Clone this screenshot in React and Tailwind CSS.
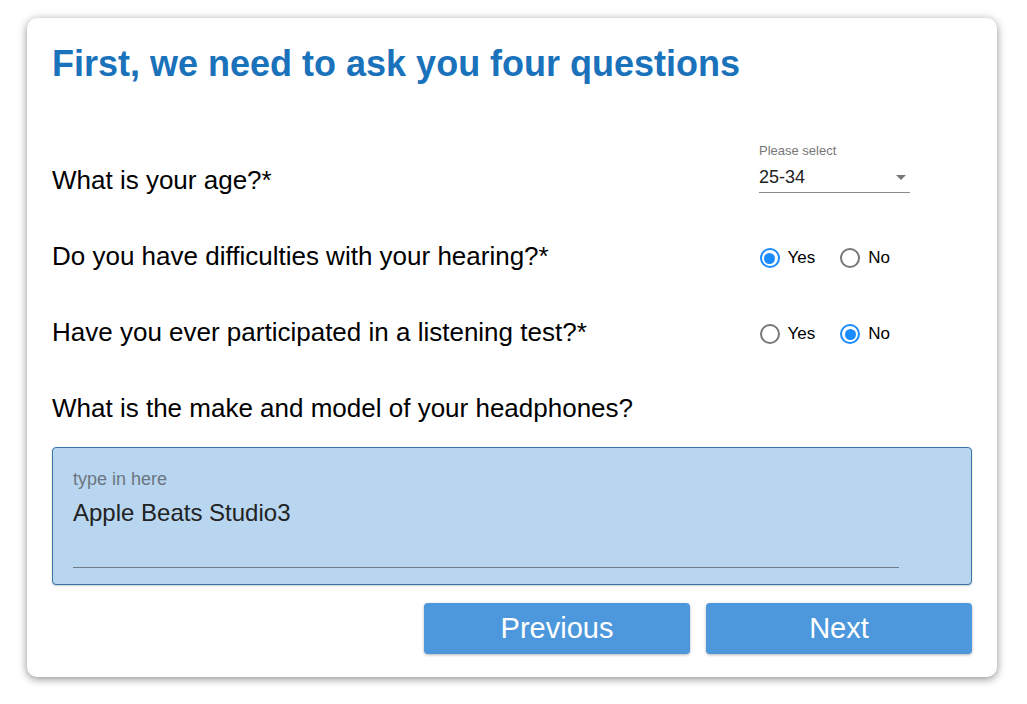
import { useState } from 'react';

const font = { fontFamily: '"Liberation Sans", Arial, sans-serif' };

function Radio({ checked, label, onClick }) {
  return (
    <button type="button" onClick={onClick} className="flex items-center gap-[8px]">
      {checked ? (
        <span className="flex h-[20px] w-[20px] items-center justify-center rounded-full border-2 border-[#1a8cff]">
          <span className="h-[11px] w-[11px] rounded-full bg-[#1a8cff]" />
        </span>
      ) : (
        <span className="h-[20px] w-[20px] rounded-full border-2 border-[#777]" />
      )}
      <span className="text-[17px] leading-[20px] text-black">{label}</span>
    </button>
  );
}

function Question({ children, control }) {
  return (
    <div className="flex h-[76px] items-center justify-between">
      <span className="text-[26px] leading-[30px] text-black">{children}</span>
      {control}
    </div>
  );
}

export default function App() {
  const [hearing, setHearing] = useState('yes');
  const [tested, setTested] = useState('no');

  return (
    <div className="h-[704px] w-[1027px] bg-white pl-[27px] pt-[18px]" style={font}>
      <div className="h-[659px] w-[970px] rounded-[10px] bg-white px-[25px] pt-[25px] shadow-[0_2px_8px_rgba(0,0,0,0.45)]">
        <h1 className="text-[36px] font-bold leading-[42px] text-[#1a72bb]">
          First, we need to ask you four questions
        </h1>

        <div className="mt-[57px]">
          <Question
            control={
              <div className="mr-[62px] w-[151px] -translate-y-[12px]">
                <div className="text-[13px] leading-[16px] text-[#777]">Please select</div>
                <div className="mt-[5px] flex h-[29px] items-start justify-between border-b border-[#8a8a8a]">
                  <span className="text-[18px] leading-[26px] text-[#222]">25-34</span>
                  <span className="mr-[4px] mt-[11px] h-0 w-0 border-x-[5px] border-t-[5px] border-x-transparent border-t-[#777]" />
                </div>
              </div>
            }
          >
            What is your age?*
          </Question>

          <Question
            control={
              <div className="mr-[82px] flex translate-y-[2px] gap-[25px]">
                <Radio checked={hearing === 'yes'} label="Yes" onClick={() => setHearing('yes')} />
                <Radio checked={hearing === 'no'} label="No" onClick={() => setHearing('no')} />
              </div>
            }
          >
            Do you have difficulties with your hearing?*
          </Question>

          <Question
            control={
              <div className="mr-[82px] flex translate-y-[2px] gap-[25px]">
                <Radio checked={tested === 'yes'} label="Yes" onClick={() => setTested('yes')} />
                <Radio checked={tested === 'no'} label="No" onClick={() => setTested('no')} />
              </div>
            }
          >
            Have you ever participated in a listening test?*
          </Question>

          <Question>What is the make and model of your headphones?</Question>
        </div>

        <div className="mt-[1px] h-[138px] w-[920px] rounded-[4px] border border-[#3d72a6] bg-[#b8d6f0] px-[20px] pt-[20px] shadow-[0_1px_2px_rgba(0,0,0,0.2)]">
          <div className="text-[18px] leading-[22px] text-[#6b7580]">type in here</div>
          <div className="mt-[9px] text-[24px] leading-[28px] text-[#222]">Apple Beats Studio3</div>
          <div className="mr-[52px] mt-[40px] border-b border-[#6f7b86]" />
        </div>

        <div className="mt-[18px] flex justify-end gap-[16px]">
          <button className="h-[51px] w-[266px] rounded-[4px] bg-[#4d98dc] text-[29px] text-white shadow-[0_1px_3px_rgba(0,0,0,0.3)]">
            Previous
          </button>
          <button className="h-[51px] w-[266px] rounded-[4px] bg-[#4d98dc] text-[29px] text-white shadow-[0_1px_3px_rgba(0,0,0,0.3)]">
            Next
          </button>
        </div>
      </div>
    </div>
  );
}
